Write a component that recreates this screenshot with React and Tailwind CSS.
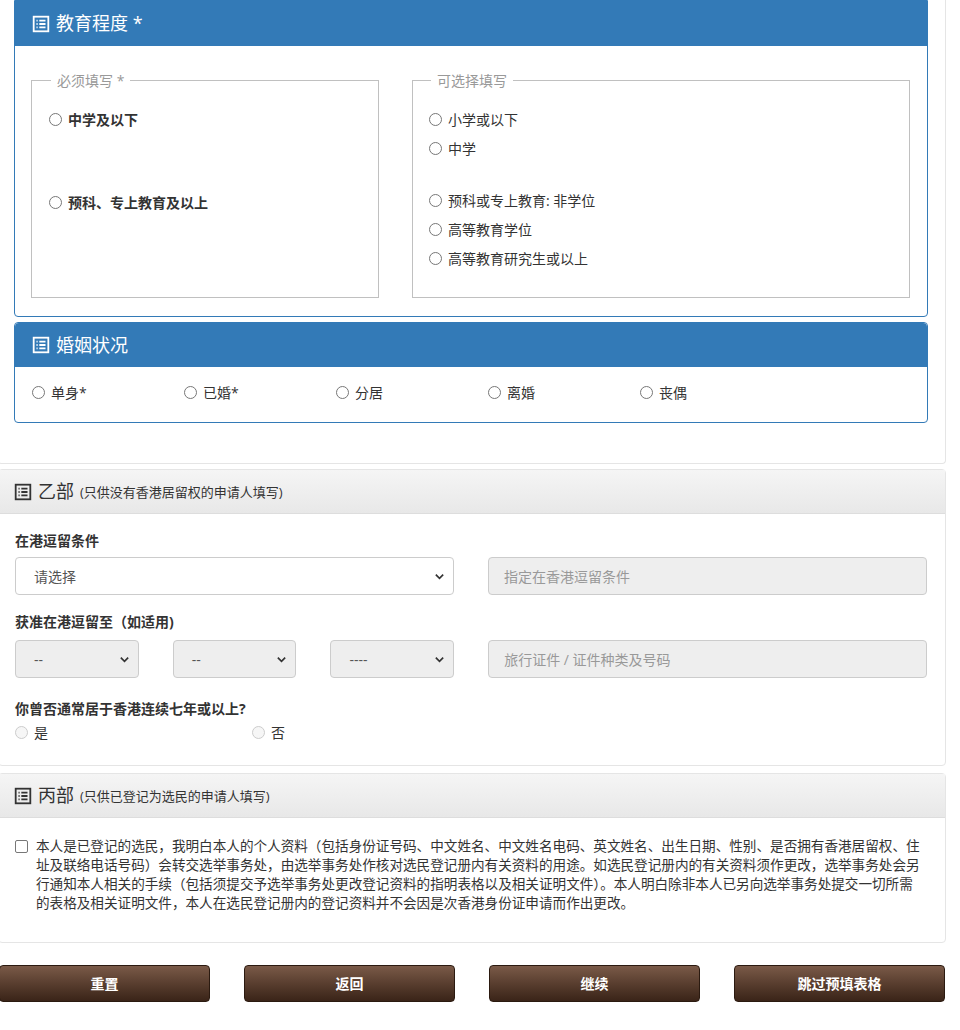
import React from "react";

const F = { fontFamily: '"Open Sans","Noto Sans CJK SC",sans-serif' };

function ListIcon({ className = "" }) {
  return (
    <svg viewBox="0 0 16 16" className={className} fill="none" stroke="currentColor" strokeWidth="1.6">
      <rect x="1.5" y="1.5" width="13" height="13" />
      <path d="M4 5h1M6.5 5h5.5M4 8h1M6.5 8h5.5M4 11h1M6.5 11h5.5" />
    </svg>
  );
}

function Radio({ label, bold, faint }) {
  return (
    <label className="flex items-center gap-[6px] text-[14px] text-[#333]">
      <span className={`w-[13px] h-[13px] rounded-full border ${faint ? "border-[#ccc] bg-[#f6f6f6]" : "border-[#777] bg-white"}`} />
      <span className={bold ? "font-bold" : ""}>{label}</span>
    </label>
  );
}

function Chevron() {
  return (
    <svg viewBox="0 0 12 12" className="w-[11px] h-[11px]" fill="none" stroke="#333" strokeWidth="1.8">
      <path d="M2 4l4 4 4-4" />
    </svg>
  );
}

function Select({ text, gray, w }) {
  return (
    <div className={`${w} h-[38px] rounded border border-[#ccc] flex items-center justify-between pl-[18px] pr-[8px] text-[14px] text-[#555] ${gray ? "bg-[#eee]" : "bg-white"}`}>
      <span>{text}</span>
      <Chevron />
    </div>
  );
}

function GrayHead({ title, sub }) {
  return (
    <div className="h-[44px] flex items-center gap-[6px] pl-[15px] bg-gradient-to-b from-[#f5f5f5] to-[#e8e8e8] border-b border-[#ddd] text-[#333]">
      <ListIcon className="w-[18px] h-[18px]" />
      <span className="text-[18px]">{title}</span>
      <span className="text-[13px] mt-[3px]">{sub}</span>
    </div>
  );
}

function Btn({ t }) {
  return (
    <div className="h-[37px] rounded-[4px] bg-gradient-to-b from-[#7a5a48] to-[#3a2418] flex items-center justify-center text-white font-bold text-[14px] border border-[#2b1a10]">
      {t}
    </div>
  );
}

export default function App() {
  return (
    <div style={F} className="w-[960px] h-[1030px] bg-white overflow-hidden relative">
      <div className="-ml-[2px] w-[948px] border border-[#e5e5e5] border-t-0 rounded-b pb-[40px]">
        <div className="ml-[15px] w-[914px] border border-[#337ab7] rounded-b">
          <div className="h-[45px] bg-[#337ab7] flex items-center gap-[6px] pl-[17px] text-white">
            <ListIcon className="w-[18px] h-[18px]" />
            <span className="text-[18px]">教育程度 *</span>
          </div>
          <div className="flex gap-[33px] pl-[16px] pt-[24px] pb-[18px]">
            <fieldset className="w-[348px] h-[228px] border border-[#c0c0c0] px-[17px]">
              <legend className="px-[6px] ml-[2px] text-[14px] text-[#999]">必须填写 *</legend>
              <div className="pt-[18px] flex flex-col gap-[62px]">
                <Radio label="中学及以下" bold />
                <Radio label="预科、专上教育及以上" bold />
              </div>
            </fieldset>
            <fieldset className="w-[498px] h-[228px] border border-[#c0c0c0] px-[16px]">
              <legend className="px-[6px] ml-[2px] text-[14px] text-[#999]">可选择填写</legend>
              <div className="pt-[18px] flex flex-col">
                <div className="h-[29px]"><Radio label="小学或以下" /></div>
                <div className="h-[52px]"><Radio label="中学" /></div>
                <div className="h-[29px]"><Radio label="预科或专上教育: 非学位" /></div>
                <div className="h-[29px]"><Radio label="高等教育学位" /></div>
                <div className="h-[29px]"><Radio label="高等教育研究生或以上" /></div>
              </div>
            </fieldset>
          </div>
        </div>
        <div className="ml-[15px] mt-[5px] w-[914px] border border-[#337ab7] rounded">
          <div className="h-[44px] bg-[#337ab7] rounded-t flex items-center gap-[6px] pl-[17px] text-white">
            <ListIcon className="w-[18px] h-[18px]" />
            <span className="text-[18px]">婚姻状况</span>
          </div>
          <div className="h-[55px] flex items-center pl-[17px] pb-[4px]">
            {["单身*", "已婚*", "分居", "离婚", "丧偶"].map((t) => (
              <div key={t} className="w-[152px]"><Radio label={t} /></div>
            ))}
          </div>
        </div>
      </div>

      <div className="-ml-[2px] mt-[5px] w-[948px] border border-[#e5e5e5] rounded">
        <GrayHead title="乙部" sub="(只供没有香港居留权的申请人填写)" />
        <div className="pl-[16px] pr-[18px] pt-[16px] pb-[22px] text-[#333]">
          <div className="text-[14px] font-bold">在港逗留条件</div>
          <div className="flex gap-[34px] mt-[6px]">
            <Select text="请选择" w="w-[440px]" />
            <div className="w-[440px] h-[38px] rounded border border-[#ccc] bg-[#eee] flex items-center pl-[15px] text-[14px] text-[#999]">指定在香港逗留条件</div>
          </div>
          <div className="text-[14px] font-bold mt-[16px]">获准在港逗留至（如适用)</div>
          <div className="flex gap-[34px] mt-[8px]">
            <Select text="--" gray w="w-[124px]" />
            <Select text="--" gray w="w-[124px]" />
            <Select text="----" gray w="w-[124px]" />
            <div className="w-[440px] h-[38px] rounded border border-[#ccc] bg-[#eee] flex items-center pl-[15px] text-[14px] text-[#999]">旅行证件 / 证件种类及号码</div>
          </div>
          <div className="text-[14px] font-bold mt-[20px]">你曾否通常居于香港连续七年或以上?</div>
          <div className="flex mt-[3px]">
            <div className="w-[237px]"><Radio label="是" faint /></div>
            <Radio label="否" faint />
          </div>
        </div>
      </div>

      <div className="-ml-[2px] mt-[7px] w-[948px] border border-[#e5e5e5] rounded">
        <GrayHead title="丙部" sub="(只供已登记为选民的申请人填写)" />
        <div className="flex gap-[8px] pl-[16px] pr-[22px] pt-[18px] pb-[30px]">
          <span className="w-[13px] h-[13px] mt-[4px] shrink-0 border border-[#777] rounded-[2px]" />
          <p className="text-[13.6px] leading-[19px] text-[#333]">
            本人是已登记的选民，我明白本人的个人资料（包括身份证号码、中文姓名、中文姓名电码、英文姓名、出生日期、性别、是否拥有香港居留权、住址及联络电话号码）会转交选举事务处，由选举事务处作核对选民登记册内有关资料的用途。如选民登记册内的有关资料须作更改，选举事务处会另行通知本人相关的手续（包括须提交予选举事务处更改登记资料的指明表格以及相关证明文件）。本人明白除非本人已另向选举事务处提交一切所需的表格及相关证明文件，本人在选民登记册内的登记资料并不会因是次香港身份证申请而作出更改。
          </p>
        </div>
      </div>

      <div className="grid grid-cols-4 gap-[34px] w-[946px] -ml-[1px] mt-[22px]">
        <Btn t="重置" />
        <Btn t="返回" />
        <Btn t="继续" />
        <Btn t="跳过预填表格" />
      </div>
    </div>
  );
}
